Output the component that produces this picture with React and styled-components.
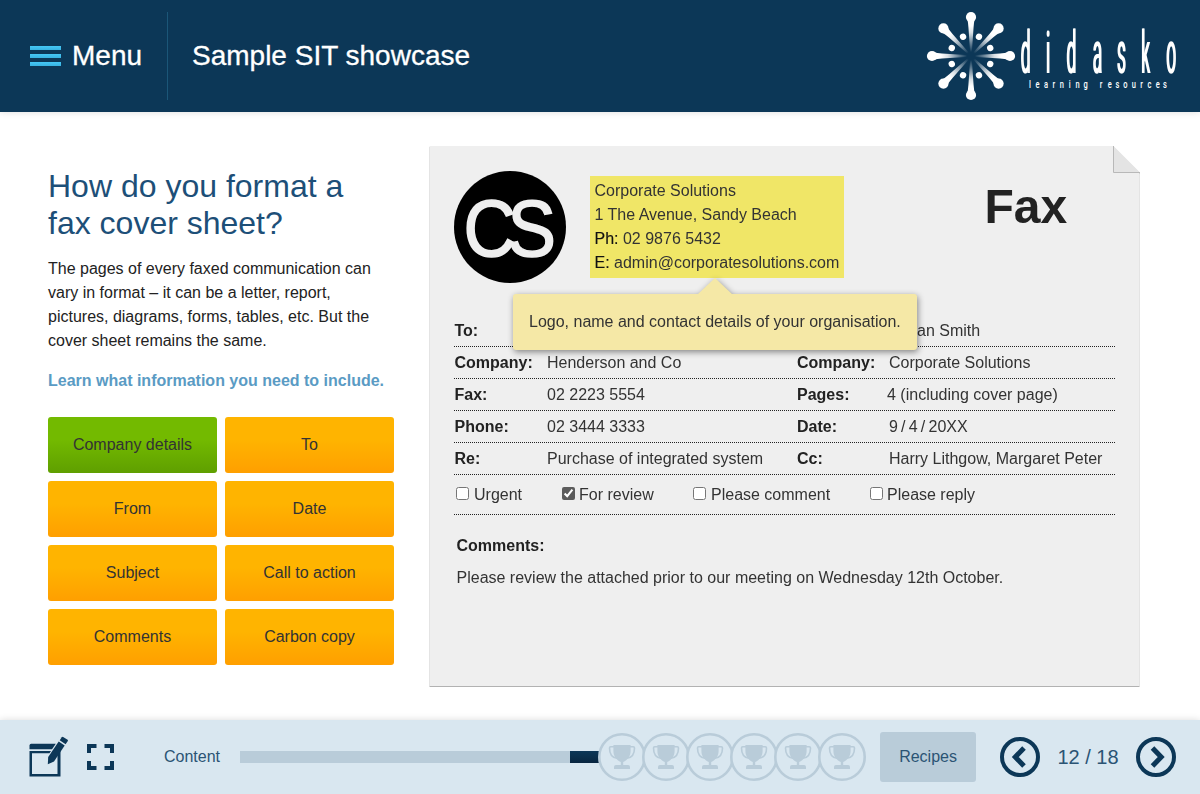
import React from 'react';
import styled, { createGlobalStyle } from 'styled-components';

const navy = '#0c3757';
const pale = '#d9e7f0';
const muted = '#b9ccd9';

const GlobalStyle = createGlobalStyle`
  * { box-sizing: border-box; }
  body {
    margin: 0;
    background: #fff;
    color: #333;
    font: 16px/24px "Liberation Sans", Arial, sans-serif;
  }
  h1, h2, p { margin: 0; }
  button { font: inherit; border: 0; padding: 0; }
  svg { display: block; flex: none; }
`;

const Page = styled.div`
  display: flex;
  flex-direction: column;
  width: 1200px;
  height: 794px;
  overflow: hidden;
`;

const Header = styled.header`
  display: flex;
  align-items: center;
  height: 112px;
  flex: none;
  padding: 0 24px 0 30px;
  background: ${navy};
  color: #fff;
  box-shadow: 0 0 7px rgba(0, 0, 0, 0.14);
`;

const MenuButton = styled.button`
  display: flex;
  align-items: center;
  gap: 11px;
  width: 137px;
  background: none;
  color: inherit;
  font-size: 28px;
  line-height: 36px;
  -webkit-text-stroke: 0.3px #fff;
`;

const Bars = styled.span`
  display: grid;
  gap: 4px;
  width: 31px;
`;

const Bar = styled.i`
  height: 4px;
  background: linear-gradient(#45c8f6, #38b3e2);
`;

const Course = styled.h1`
  display: flex;
  align-items: center;
  height: 88px;
  padding-left: 24px;
  border-left: 1px solid #1b5678;
  font-size: 28px;
  font-weight: 400;
  -webkit-text-stroke: 0.3px #fff;
`;

const Brand = styled.svg`
  margin-left: auto;
`;

const Main = styled.main`
  display: flex;
  flex: 1;
  padding: 34px 60px 0 48px;
`;

const Intro = styled.section`
  width: 346px;
  margin-right: 35px;
  padding-top: 22px;
`;

const Question = styled.h2`
  font-size: 32px;
  line-height: 37px;
  font-weight: 400;
  color: #1d4f78;
`;

const Copy = styled.p`
  margin-top: 15px;
  color: #222;
`;

const Prompt = styled.p`
  margin-top: 16px;
  font-weight: 700;
  color: #5a9bc4;
`;

const Topics = styled.div`
  display: grid;
  grid-template-columns: 1fr 1fr;
  gap: 8px;
  margin-top: 24px;
`;

const Topic = styled.button`
  height: 56px;
  border-radius: 3px;
  color: #333;
  background: ${({ $active }) =>
    $active
      ? 'linear-gradient(#73ba00 40%, #5f9f00)'
      : 'linear-gradient(#ffb400 40%, #ff9f00)'};
`;

const Sheet = styled.article`
  position: relative;
  width: 711px;
  height: 540px;
  padding: 25px;
  filter: drop-shadow(0.5px 1px 0.7px rgba(0, 0, 0, 0.3));

  &::before {
    content: '';
    position: absolute;
    inset: 0;
    z-index: -1;
    background: #efefef;
    clip-path: polygon(0.5px 0, 684px 0, 710.5px 27px, 710.5px 100%, 0.5px 100%);
  }
`;

const Fold = styled.svg`
  position: absolute;
  top: 0;
  right: 0;
`;

const Letterhead = styled.header`
  display: flex;
  align-items: flex-start;
  height: 144px;
`;

const Contact = styled.address`
  margin: 5px 0 0 24px;
  padding: 3px 4.5px;
  width: 254px;
  height: 102px;
  background: #f0e667;
  font-style: normal;
  white-space: nowrap;
  color: #333;

  b { font-weight: 400; color: #111; -webkit-text-stroke: 0.15px #111; }
`;

const FaxTitle = styled.h2`
  margin: 8px 0 0 140.5px;
  font-size: 48px;
  line-height: 56px;
  color: #222;
`;

const Row = styled.div`
  display: grid;
  grid-template-columns: 92.5px 250px 92px 1fr;
  width: 661px;
  height: 32px;
  padding: 4px 0 0 0.5px;
  border-bottom: 1px dotted #222;
  white-space: nowrap;

  b { color: #222; }
`;

const Value = styled.span`
  margin-left: ${({ $shift = 0 }) => $shift}px;
`;

const Options = styled.div`
  display: flex;
  width: 661px;
  height: 40px;
  padding: 8px 0 0 2px;
  border-bottom: 1px dotted #222;
`;

const Option = styled.label`
  display: flex;
  width: ${({ $width }) => $width}px;
  white-space: nowrap;

  input {
    width: 13px;
    height: 13px;
    margin: 4px ${({ $gap }) => $gap}px 0 0;
    accent-color: #5c5c5c;
  }
`;

const Comments = styled.section`
  padding: 19px 0 0 2.5px;

  b { color: #222; }
  p { margin-top: 8px; }
`;

const Tip = styled.div`
  position: absolute;
  left: 84px;
  top: 148px;
  width: 404px;
  height: 56px;
  padding: 16px;
  border-radius: 3px;
  background: #f5e8a6;
  filter: drop-shadow(1px 2px 3px rgba(0, 0, 0, 0.45));
  white-space: nowrap;

  &::before {
    content: '';
    position: absolute;
    left: 184px;
    top: -16px;
    border: solid transparent;
    border-width: 0 18px 17px;
    border-bottom-color: #f5e8a6;
  }
`;

const Footer = styled.footer`
  display: flex;
  align-items: center;
  height: 74px;
  flex: none;
  padding: 0 24px 0 28px;
  background: ${pale};
  color: #2b5474;
  box-shadow: 0 0 7px rgba(0, 0, 0, 0.14);
`;

const Tool = styled.button`
  margin-right: ${({ $after }) => $after}px;
  background: none;
`;

const Progress = styled.div`
  display: flex;
  align-items: center;
  flex: none;
  width: 660px;
  padding-left: 20px;
`;

const Track = styled.div`
  width: 358px;
  height: 12px;
  padding-left: 330px;
  background: ${muted};
`;

const Done = styled.div`
  width: 30px;
  height: 12px;
  background: linear-gradient(#0c3757, #082640);
`;

const Awards = styled.div`
  display: flex;

  svg { margin-right: -4px; }
`;

const Recipes = styled.button`
  width: 96px;
  height: 50px;
  border-radius: 3px;
  background: ${muted};
  color: #2b5474;
`;

const Pager = styled.nav`
  display: flex;
  align-items: center;
  justify-content: space-between;
  width: 176px;
  margin-left: auto;
  font-size: 20px;
`;

const dots = Array.from({ length: 8 }, (_, i) => 22.5 + i * 45);
const rays = Array.from({ length: 8 }, (_, i) => i * 45);

const Logo = () => (
  <Brand width="250" height="92" viewBox="926 10 250 92" overflow="visible">
    <defs>
      <linearGradient id="ray" gradientUnits="userSpaceOnUse" x1="0" y1="-4" x2="0" y2="-30">
        <stop offset="0" stopColor="#fff" stopOpacity="0" />
        <stop offset="0.75" stopColor="#fff" stopOpacity="0.85" />
        <stop offset="1" stopColor="#fff" />
      </linearGradient>
      <filter id="widen" x="-5%" y="-5%" width="110%" height="110%" colorInterpolationFilters="sRGB">
        <feOffset in="SourceGraphic" dx="3.6" result="moved" />
        <feMerge>
          <feMergeNode in="SourceGraphic" />
          <feMergeNode in="moved" />
        </feMerge>
      </filter>
    </defs>
    <g transform="translate(971 56)" fill="#fff">
      {rays.map((a) => (
        <g key={a} transform={`rotate(${a})`}>
          <path d="M-.7-2L-2.6-29Q-3-34-3.7-37H3.7Q3-34 2.6-29L.7-2z" fill="url(#ray)" />
          <circle cy="-39" r="5.1" />
        </g>
      ))}
      {dots.map((a) => (
        <circle key={a} cy="-20.8" r="3.2" transform={`rotate(${a})`} />
      ))}
    </g>
    <g fill="#fff">
      <text
        transform="translate(1020.3 72.700) scale(.29 1)"
        x="0 87 158 248 332 415 502"
        fontSize="60"
        fontFamily="Roboto, Liberation Sans, sans-serif"
        fontWeight="400"
        filter="url(#widen)"
      >
        didasko
      </text>
      <text
        transform="translate(1029 88) scale(.65 1)"
        x="0 10 23 36 47.5 61 71.5 84 100 109 121 133 145 158 171 182.5 195 206"
        fontSize="11.5"
        fontFamily="Roboto, Liberation Sans, sans-serif"
        fontWeight="500"
      >
        learning resources
      </text>
    </g>
  </Brand>
);

const CompanyMark = () => (
  <svg width="112" height="112" viewBox="0 0 112 112">
    <circle cx="56" cy="56" r="56" fill="#000" />
    <text
      transform="translate(9.500 84.500) scale(.92 1)"
      x="0 47.800"
      fontSize="79"
      fontFamily="Liberation Sans, Arial, sans-serif"
      fill="#efefef"
      stroke="#efefef"
      strokeWidth="1.6"
    >
      CS
    </text>
  </svg>
);

const NoteIcon = () => (
  <svg width="42" height="42" viewBox="0 0 42 42" fill={navy}>
    <path d="M1.500 13.300v-3.800q0-1.700 1.700-1.700h24.600L24 13.300z" />
    <path d="M1.500 15h21.500L21.500 17.200H4v20.800h25.500V17.500L32.500 13v27.500h-31z" />
    <path d="M19.800 28.300l.4-7.300L30.700 5.500l6 3.900L26 25.500z" />
    <path d="M31.700 4.300L33.800 1.200q.5-.7 1.300-.3l4.500 2.900q.6.500.2 1.200l-2.200 3.200z" />
  </svg>
);

const ExpandIcon = () => (
  <svg width="27" height="26" viewBox="0 0 27 26" fill="none" stroke={navy} strokeWidth="4">
    <path d="M2 9V2h7.500M17.500 2H25v7M25 17v7h-7.500M9.500 24H2v-7" />
  </svg>
);

const Trophy = () => (
  <svg width="48" height="48" viewBox="-24 -24 48 48">
    <circle r="22.700" fill={pale} stroke={muted} strokeWidth="2.600" />
    <g fill={muted}>
      <path d="M-8.600-12H8.600V-6C8.600-.5 5.500 3 1.200 5V8H6q2 0 2 2v2H-8v-2q0-2 2-2h4.800V5C-5.500 3-8.600-.5-8.600-6z" />
      <path
        d="M-8-10.300h-3.300q-1.200 0-1.200 1.200C-12.500-3-9.500.6-5 1.300M8-10.300h3.300q1.200 0 1.200 1.200C12.500-3 9.500.6 5 1.300"
        fill="none"
        stroke={muted}
        strokeWidth="1.600"
      />
    </g>
  </svg>
);

const Arrow = ({ next }) => (
  <svg width="40" height="40" viewBox="0 0 40 40" fill="none" stroke={navy} strokeWidth="4">
    <circle cx="20" cy="20" r="18" />
    <path d={next ? 'M16.500 11l8.700 9-8.700 9' : 'M24 11l-8.700 9 8.700 9'} strokeWidth="5" />
  </svg>
);

const topics = ['Company details', 'To', 'From', 'Date', 'Subject', 'Call to action', 'Comments', 'Carbon copy'];

const rows = [
  ['To:', '', 'From:', 'Susan Smith', 0.5],
  ['Company:', 'Henderson and Co', 'Company:', 'Corporate Solutions'],
  ['Fax:', '02 2223 5554', 'Pages:', '4 (including cover page)', -2],
  ['Phone:', '02 3444 3333', 'Date:', '9\u2009/\u20094\u2009/\u200920XX'],
  ['Re:', 'Purchase of integrated system', 'Cc:', 'Harry Lithgow, Margaret Peter'],
];

const options = [
  ['Urgent', 106, 5],
  ['For review', 131, 4],
  ['Please comment', 177, 5],
  ['Please reply', 120, 4],
];

export default function App() {
  return (
    <Page>
      <GlobalStyle />
      <Header>
        <MenuButton>
          <Bars>
            <Bar />
            <Bar />
            <Bar />
          </Bars>
          Menu
        </MenuButton>
        <Course>Sample SIT showcase</Course>
        <Logo />
      </Header>
      <Main>
        <Intro>
          <Question>
            How do you format a<br />
            fax cover sheet?
          </Question>
          <Copy>
            The pages of every faxed communication can vary in format – it can be a letter, report,
            pictures, diagrams, forms, tables, etc. But the cover sheet remains the same.
          </Copy>
          <Prompt>Learn what information you need to include.</Prompt>
          <Topics>
            {topics.map((t, i) => (
              <Topic key={t} $active={i === 0}>
                {t}
              </Topic>
            ))}
          </Topics>
        </Intro>
        <Sheet>
          <Fold width="27" height="27" viewBox="0 0 27 27">
            <path d="M.5 0V26.500H27z" fill="#e4e4e4" />
            <path d="M.5 0V26.500H27" fill="none" stroke="#b8b8b8" />
          </Fold>
          <Letterhead>
            <CompanyMark />
            <Contact>
              Corporate Solutions
              <br />1 The Avenue, Sandy Beach
              <br />
              <b>Ph:</b> 02 9876 5432
              <br />
              <b>E:</b> admin@corporatesolutions.com
            </Contact>
            <FaxTitle>Fax</FaxTitle>
          </Letterhead>
          {rows.map(([a, b, c, d, shift]) => (
            <Row key={a}>
              <b>{a}</b>
              <Value>{b}</Value>
              <b>{c}</b>
              <Value $shift={shift}>{d}</Value>
            </Row>
          ))}
          <Options>
            {options.map(([label, width, gap]) => (
              <Option key={label} $width={width} $gap={gap}>
                <input type="checkbox" defaultChecked={label === 'For review'} />
                {label}
              </Option>
            ))}
          </Options>
          <Comments>
            <b>Comments:</b>
            <p>Please review the attached prior to our meeting on Wednesday 12th October.</p>
          </Comments>
          <Tip>Logo, name and contact details of your organisation.</Tip>
        </Sheet>
      </Main>
      <Footer>
        <Tool $after={17}>
          <NoteIcon />
        </Tool>
        <Tool $after={50}>
          <ExpandIcon />
        </Tool>
        Content
        <Progress>
          <Track>
            <Done />
          </Track>
          <Awards>
            {[0, 1, 2, 3, 4, 5].map((n) => (
              <Trophy key={n} />
            ))}
          </Awards>
        </Progress>
        <Recipes>Recipes</Recipes>
        <Pager>
          <Arrow />
          <span>12 / 18</span>
          <Arrow next />
        </Pager>
      </Footer>
    </Page>
  );
}
